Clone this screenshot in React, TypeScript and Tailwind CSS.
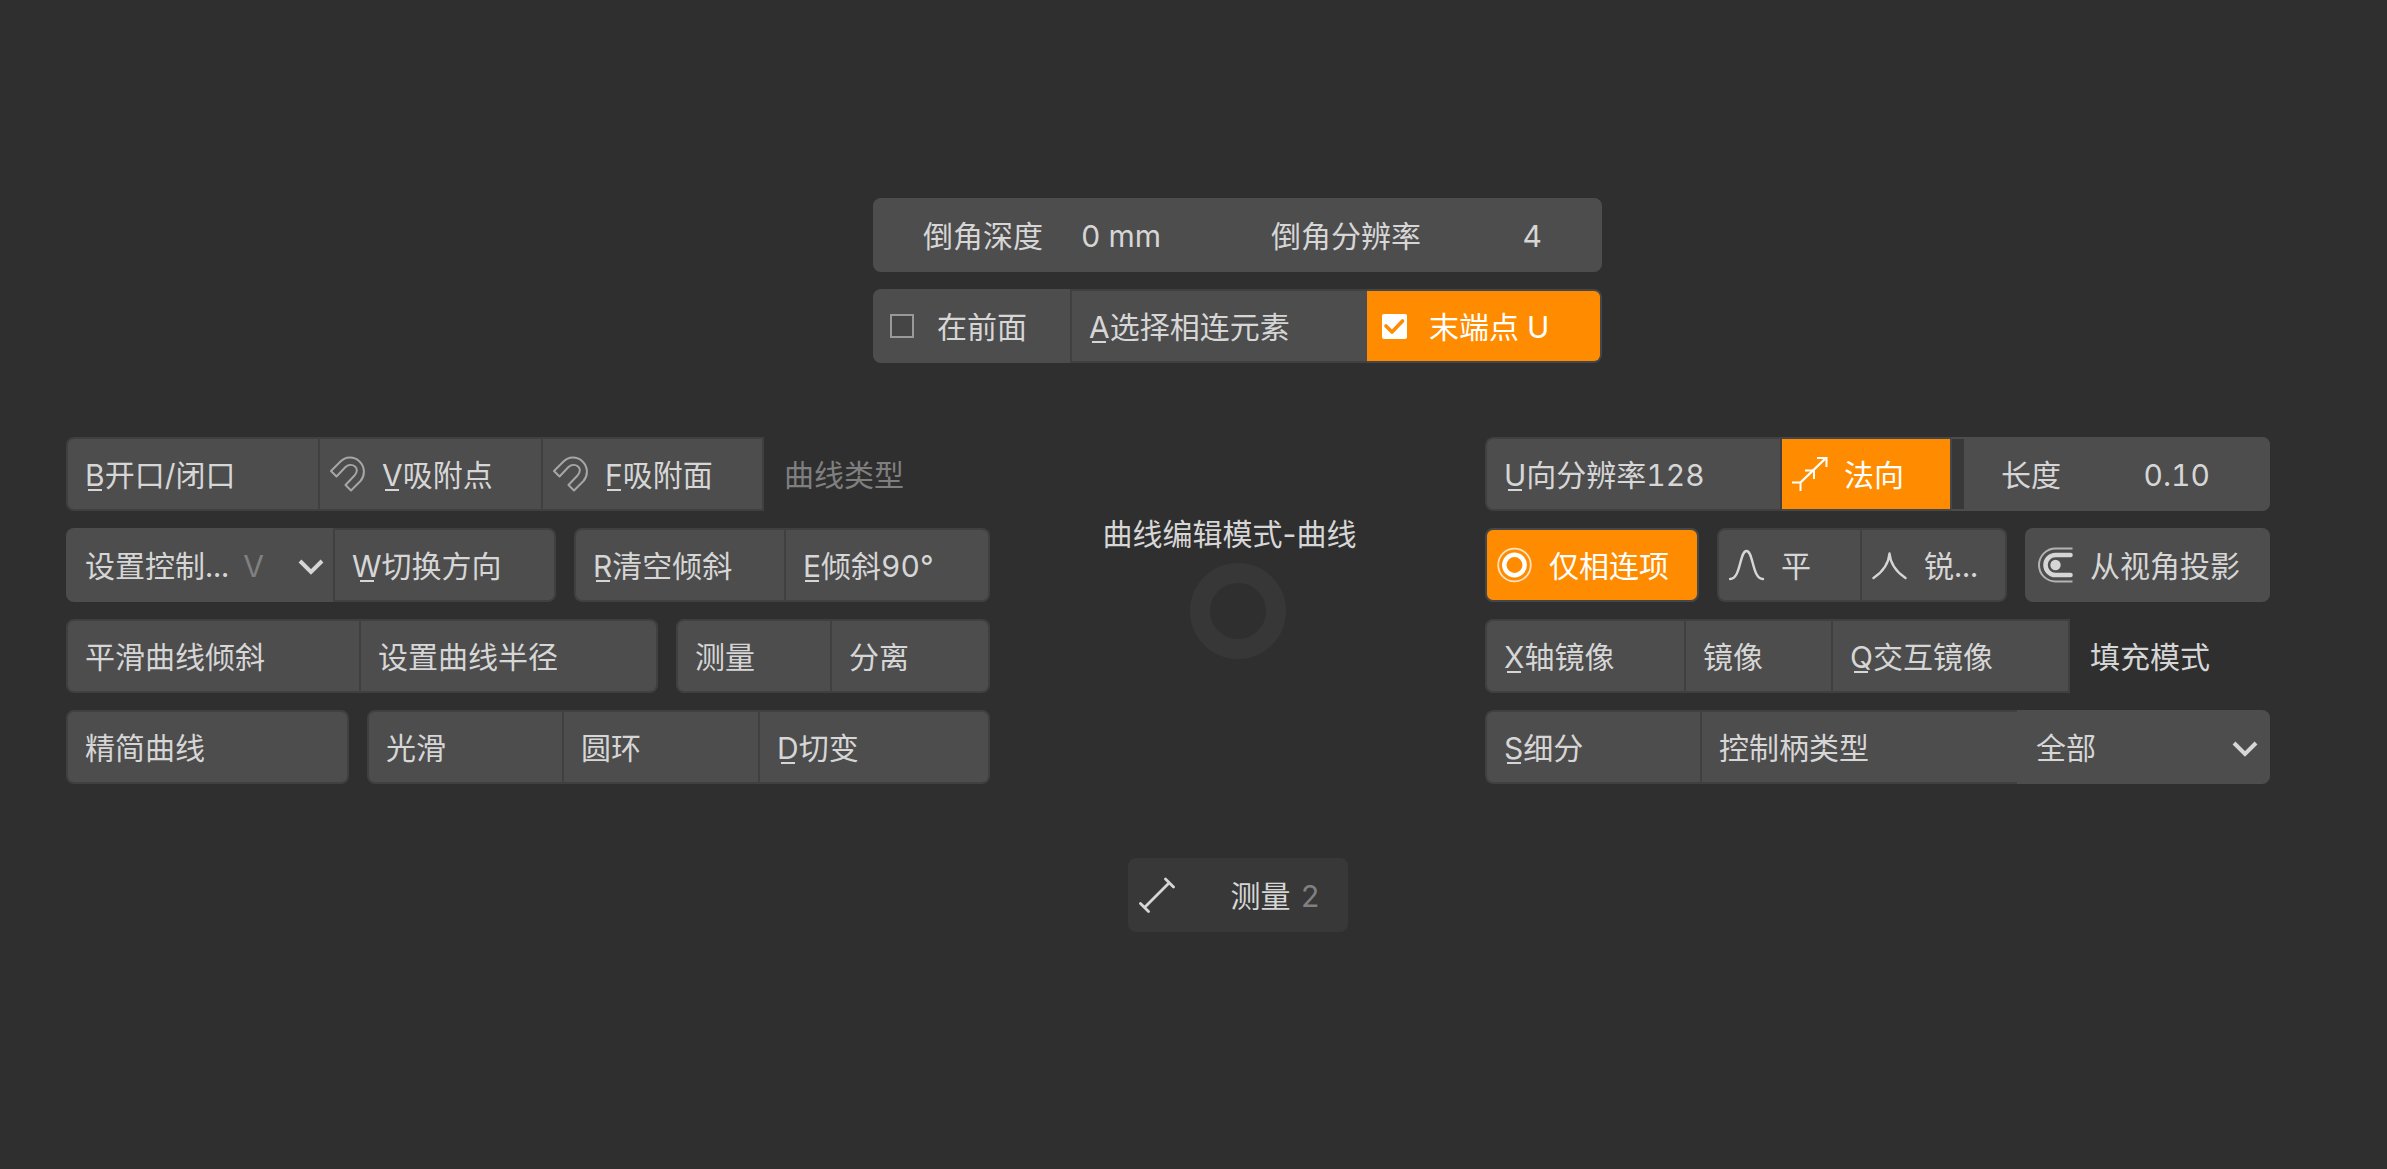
import type { ReactNode } from "react";

function Icon({ children, className = "size-9" }: { children: ReactNode; className?: string }) {
  return (
    <svg viewBox="0 0 36 36" fill="none" stroke="currentColor" className={`shrink-0 ${className}`} aria-hidden="true">
      {children}
    </svg>
  );
}

const Magnet = () => (
  <Icon className="size-9 text-[#a6a6a6]">
    <path
      d="M1 15 L10.5 5.5 C15.5 0.5 23.5 0 29 5 C35 10.5 35.5 19 30.5 25 L21 34.5 L15.5 29 L24.5 19.5 C27.5 16 27.5 12.5 25 10.5 C22.5 8.5 18.5 8.5 15.5 11 L6.5 20.5 Z"
      strokeWidth="2"
      strokeLinejoin="round"
    />
  </Icon>
);

const Normals = () => (
  <Icon>
    <path d="M8.5 26.5 L34 2" strokeWidth="2.4" />
    <path d="M0 26.5 H8.5 V35 M13 14.5 H22 V23 M25 2 H34.5 V11" strokeWidth="2" />
  </Icon>
);

const Ring = () => (
  <Icon>
    <circle cx="17.5" cy="18" r="16.3" strokeWidth="1.8" opacity="0.75" />
    <circle cx="17.5" cy="18" r="10.2" strokeWidth="4.5" />
  </Icon>
);

const Bell = () => (
  <Icon>
    <path d="M1 32 C12 32 10.5 4 17.5 4 C24.5 4 23 32 34 32" strokeWidth="2.4" strokeLinecap="round" />
  </Icon>
);

const Sharp = () => (
  <Icon>
    <path d="M1.5 31 C9 26 16.5 18 17.5 6.5 C18.5 18 26 26 33.5 31" strokeWidth="2.4" strokeLinecap="round" strokeLinejoin="round" />
  </Icon>
);

const Projected = () => (
  <Icon>
    <path d="M34.5 1.5 H17.5 A16.5 16.5 0 0 0 17.5 34.5 H34.5" strokeWidth="2" opacity="0.75" />
    <path d="M32.5 8 H17.5 A10 10 0 0 0 17.5 28 H32.5" strokeWidth="4.6" strokeLinecap="round" />
    <circle cx="17.5" cy="18" r="5.2" fill="currentColor" stroke="none" />
  </Icon>
);

const Ruler = () => (
  <Icon>
    <path d="M6 30 L30 6 M26.5 2 L34.5 10 M1.5 26.5 L9.5 34.5" strokeWidth="2.8" strokeLinecap="round" />
  </Icon>
);

function Chevron({ className = "" }: { className?: string }) {
  return (
    <svg viewBox="0 0 26 16" fill="none" stroke="currentColor" className={`mt-1 h-4 w-[26px] shrink-0 ${className}`} aria-hidden="true">
      <path d="M2 2 L13 13 L24 2" strokeWidth="4" />
    </svg>
  );
}

/* Accelerator letter with a short bar under it */
function Key({ children }: { children: string }) {
  return (
    <span className="relative after:absolute after:bottom-[2px] after:left-1/2 after:h-[2px] after:w-[14px] after:-translate-x-1/2 after:bg-current">
      {children}
    </span>
  );
}

const Text = ({ children, className = "" }: { children: ReactNode; className?: string }) => (
  <span className={`pt-px whitespace-nowrap ${className}`}>{children}</span>
);

/* A line of button groups; `cols` sets their shares of the width */
const Row = ({ children, cols }: { children: ReactNode; cols: string }) => (
  <div className={`grid h-[74px] gap-x-[18px] ${cols}`}>{children}</div>
);

/* Buttons joined edge to edge */
const Group = ({ children, cols = "" }: { children: ReactNode; cols?: string }) => (
  <div className={`grid overflow-hidden ${cols}`}>{children}</div>
);

interface CellProps {
  icon?: ReactNode;
  active?: boolean;
  square?: boolean;
  k?: string;
  children: ReactNode;
}

function Cell({ icon, active, square, k, children }: CellProps) {
  const tone = active ? "border-[#45474b] bg-[#ff8c00] text-white" : "border-[#404040] bg-[#4d4d4d]";
  return (
    <button
      type="button"
      aria-pressed={active}
      className={`flex items-center border-y-2 border-r-2 text-left first:rounded-l-lg first:border-l-2 ${
        square ? "" : "last:rounded-r-lg"
      } ${icon ? "gap-4 pl-[10px]" : "pl-[17px]"} ${tone}`}
    >
      {icon}
      <Text>
        {k && <Key>{k}</Key>}
        {children}
      </Text>
    </button>
  );
}

function NumberField({ label, value, pad = "pl-[50px]" }: { label: string; value: string; pad?: string }) {
  return (
    <label className={`flex grow items-center justify-between bg-[#4d4d4d] pr-[60px] ${pad}`}>
      <Text>{label}</Text>
      <input defaultValue={value} className="w-28 bg-transparent pt-px text-right outline-none" />
    </label>
  );
}

export default function App() {
  return (
    <main className="min-h-screen bg-[#2f2f2f] pt-[198px] pr-[117px] pb-16 pl-[66px] font-[Inter,'Noto_Sans_CJK_SC',sans-serif] text-[30px] leading-[36px] text-[#d6d6d6] tabular-nums">
      <div className="grid grid-cols-[minmax(0,924fr)_minmax(0,495fr)_minmax(0,785fr)] gap-y-[74px]">
        <section className="col-start-2 flex w-[729px] flex-col gap-[17px] justify-self-center">
          <div className="grid h-[74px] grid-cols-[348fr_381fr] overflow-hidden rounded-lg">
            <NumberField label="倒角深度" value="0 mm" />
            <NumberField label="倒角分辨率" value="4" />
          </div>
          <div className="grid h-[74px] grid-cols-[199fr_295fr_235fr] overflow-hidden rounded-lg">
            <label className="flex items-center gap-[23px] border-r-2 border-[#404040] bg-[#4d4d4d] pl-[17px]">
              <input type="checkbox" className="size-6 appearance-none border-2 border-[#999999] bg-[#454545]" />
              <Text>在前面</Text>
            </label>
            <button type="button" className="flex items-center border-y-2 border-[#404040] bg-[#4d4d4d] pl-[17px]">
              <Text>
                <Key>A</Key>选择相连元素
              </Text>
            </button>
            <label className="relative flex items-center gap-[22px] rounded-r-lg border-y-2 border-r-2 border-[#45474b] bg-[#ff8c00] pl-[15px] text-white">
              <input type="checkbox" defaultChecked className="size-[25px] appearance-none rounded-[2px] bg-white" />
              <svg viewBox="0 0 25 25" fill="none" className="pointer-events-none absolute left-[15px] size-[25px]" aria-hidden="true">
                <path d="M4 12 L10 18 L20.5 7" stroke="#ff8c00" strokeWidth="3.6" strokeLinecap="round" strokeLinejoin="round" />
              </svg>
              <Text>末端点 U</Text>
            </label>
          </div>
        </section>

        <section className="col-start-1 flex flex-col gap-[17px]">
          <div className="grid h-[74px] grid-cols-[698fr_226fr]">
            <Group cols="grid-cols-[254fr_223fr_221fr]">
              <Cell k="B">开口/闭口</Cell>
              <Cell icon={<Magnet />} k="V">吸附点</Cell>
              <Cell square icon={<Magnet />} k="F">吸附面</Cell>
            </Group>
            <div className="flex items-center pl-5 text-[#7f7f7f]">
              <Text>曲线类型</Text>
            </div>
          </div>
          <Row cols="grid-cols-[490fr_416fr]">
            <Group cols="grid-cols-[269fr_221fr]">
              <button type="button" aria-haspopup="menu" className="flex items-center rounded-l-lg border-r-2 border-[#404040] bg-[#4d4d4d] pr-[9px] pl-[19px]">
                <Text>设置控制...</Text>
                <Text className="ml-[14px] text-[#808080]">V</Text>
                <Chevron className="ml-auto" />
              </button>
              <Cell k="W">切换方向</Cell>
            </Group>
            <Group cols="grid-cols-[212fr_204fr]">
              <Cell k="R">清空倾斜</Cell>
              <Cell k="E">倾斜90°</Cell>
            </Group>
          </Row>
          <Row cols="grid-cols-[592fr_314fr]">
            <Group cols="grid-cols-[295fr_297fr]">
              <Cell>平滑曲线倾斜</Cell>
              <Cell>设置曲线半径</Cell>
            </Group>
            <Group cols="grid-cols-[156fr_158fr]">
              <Cell>测量</Cell>
              <Cell>分离</Cell>
            </Group>
          </Row>
          <Row cols="grid-cols-[283fr_623fr]">
            <Group>
              <Cell>精简曲线</Cell>
            </Group>
            <Group cols="grid-cols-[197fr_196fr_230fr]">
              <Cell>光滑</Cell>
              <Cell>圆环</Cell>
              <Cell k="D">切变</Cell>
            </Group>
          </Row>
        </section>

        <section className="flex flex-col items-center pt-[79px]">
          <h1 className="mr-4 whitespace-nowrap proportional-nums">曲线编辑模式-曲线</h1>
          <div className="mt-[11px] size-24 rounded-full border-[20px] border-[#373737]" />
        </section>

        <section className="flex flex-col gap-[17px]">
          <div className="grid h-[74px] grid-cols-[297fr_170fr_318fr] overflow-hidden rounded-lg">
            <Cell k="U">向分辨率128</Cell>
            <Cell icon={<Normals />} active>法向</Cell>
            <div className="flex bg-[#4d4d4d]">
              <div className="my-[2px] w-3 bg-[#383838]" />
              <NumberField label="长度" value="0.10" pad="pl-[37px]" />
            </div>
          </div>
          <Row cols="grid-cols-[214fr_290fr_245fr]">
            <Group>
              <Cell icon={<Ring />} active>仅相连项</Cell>
            </Group>
            <Group cols="grid-cols-[145fr_145fr]">
              <Cell icon={<Bell />}>平</Cell>
              <Cell icon={<Sharp />}>锐...</Cell>
            </Group>
            <button type="button" className="flex items-center gap-4 rounded-lg bg-[#4d4d4d] pl-[13px]">
              <Projected />
              <Text>从视角投影</Text>
            </button>
          </Row>
          <div className="grid h-[74px] grid-cols-[585fr_200fr]">
            <Group cols="grid-cols-[201fr_147fr_237fr]">
              <Cell k="X">轴镜像</Cell>
              <Cell>镜像</Cell>
              <Cell square k="Q">交互镜像</Cell>
            </Group>
            <div className="flex items-center pl-5">
              <Text>填充模式</Text>
            </div>
          </div>
          <div className="grid h-[74px] grid-cols-[217fr_315fr_253fr] overflow-hidden rounded-lg">
            <Cell k="S">细分</Cell>
            <label htmlFor="handle-type" className="flex items-center border-y-2 border-[#404040] bg-[#4d4d4d] pl-[17px]">
              <Text>控制柄类型</Text>
            </label>
            <div className="relative flex items-center">
              <select id="handle-type" className="size-full appearance-none bg-[#4d4d4d] pt-px pl-[19px] outline-none">
                <option>全部</option>
              </select>
              <Chevron className="pointer-events-none absolute right-3" />
            </div>
          </div>
        </section>

        <button type="button" className="col-start-2 flex h-[74px] w-[220px] items-center justify-self-center rounded-lg bg-[#383838] pl-[11px]">
          <Ruler />
          <Text className="ml-[56px]">测量</Text>
          <Text className="ml-[10px] text-[#808080]">2</Text>
        </button>
      </div>
    </main>
  );
}
